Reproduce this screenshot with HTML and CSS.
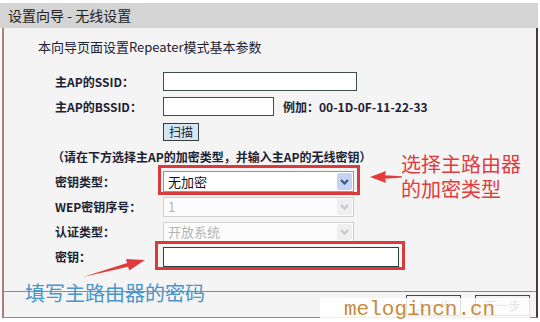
FILE: index.html
```html
<!DOCTYPE html>
<html lang="zh-CN">
<head>
    <meta charset="UTF-8">
    <title>设置向导 - 无线设置</title>
    <link rel="stylesheet" href="styles.css">
</head>
<body>
<div class="page">
    <div class="titlebar">设置向导 - 无线设置</div>
    <div class="panel">
        <div class="content">
            <p class="intro">本向导页面设置Repeater模式基本参数</p>
            <div class="form">
                <div class="row">
                    <label>主AP的SSID：</label>
                    <input class="text ssid" type="text">
                </div>
                <div class="row">
                    <label>主AP的BSSID：</label>
                    <input class="text bssid" type="text">
                    <span class="hint">例加：00-1D-0F-11-22-33</span>
                </div>
                <div class="row">
                    <label></label>
                    <button class="scan">扫描</button>
                </div>
                <div class="row note">（请在下方选择主AP的加密类型，并输入主AP的无线密钥）</div>
                <div class="row">
                    <label>密钥类型：</label>
                    <div class="select">
                        <span>无加密</span>
                        <span class="arrow"><svg width="9" height="6" viewBox="0 0 9 6"><path d="M1 1 L4.5 4.5 L8 1" fill="none" stroke-width="2"/></svg></span>
                    </div>
                </div>
                <div class="row">
                    <label>WEP密钥序号：</label>
                    <div class="select off">
                        <span>1</span>
                        <span class="arrow"><svg width="9" height="6" viewBox="0 0 9 6"><path d="M1 1 L4.5 4.5 L8 1" fill="none" stroke-width="2"/></svg></span>
                    </div>
                </div>
                <div class="row">
                    <label>认证类型：</label>
                    <div class="select off">
                        <span>开放系统</span>
                        <span class="arrow"><svg width="9" height="6" viewBox="0 0 9 6"><path d="M1 1 L4.5 4.5 L8 1" fill="none" stroke-width="2"/></svg></span>
                    </div>
                </div>
                <div class="row">
                    <label>密钥：</label>
                    <input class="text pwd" type="text">
                </div>
            </div>
        </div>
        <div class="footer">
            <button class="nav">上一步</button>
            <button class="nav">下一步</button>
        </div>
    </div>

    <!-- 标注：红框和箭头 -->
    <svg class="marks" width="540" height="322" viewBox="0 0 540 322">
        <rect x="159.5" y="166.5" width="199" height="27" fill="none" stroke="#d93a3c" stroke-width="3"/>
        <rect x="156.5" y="242.5" width="247" height="26" fill="none" stroke="#d93a3c" stroke-width="3"/>
        <polygon points="370,177 386,171 385,175.3 402,176.2 402,177.6 385,178.8 386,183" fill="#e23b3d"/>
        <polygon points="145,260 126,259 127.1,262.9 83,277 128.1,266.7 129.2,270.6" fill="#e23b3d"/>
    </svg>
    <div class="tip tip-red">选择主路由器<br>的加密类型</div>
    <div class="tip tip-blue">填写主路由器的密码</div>

    <div class="watermark">melogincn.cn</div>
</div>
</body>
</html>
```

FILE: styles.css
```css
*{
    margin: 0;
    padding: 0;
    box-sizing: border-box;
}
body{
    background: #fff;
    font-family: "Noto Sans CJK SC", sans-serif;
    color: #1c2233;
}
.page{
    position: relative;
    width: 540px;
    height: 322px;
    overflow: hidden;
}
.titlebar{
    margin: 3px 2px 0 0;
    height: 25px;
    line-height: 25px;
    padding-left: 8px;
    background: #d4d4d4;
    font-size: 14px;
    color: #222;
}
.panel{
    margin: 0 2px;
    border-left: 2px solid #b27a78;
    border-right: 2px solid #4b3a3a;
    border-bottom: 1px solid #b27a78;
    background: #f4f4f4;
}
.content{
    height: 263px;
    padding-top: 9px;
}
.intro{
    margin: 0 0 12px 34px;
    font-size: 13px;
    line-height: 20px;
}
.form{
    margin-left: 51px;
}
.row{
    display: flex;
    align-items: center;
    height: 25px;
    font-size: 12px;
}
.row label{
    width: 108px;
    font-weight: bold;
}
.note{
    margin-left: -3px;
    font-weight: bold;
}
.text{
    height: 19px;
    border: 1px solid #3e4e4e;
    background: #fff;
}
.ssid{
    width: 194px;
}
.bssid{
    width: 111px;
}
.pwd{
    width: 236px;
    height: 20px;
    border-color: #2a4040;
}
.hint{
    margin-left: 9px;
    font-weight: bold;
}
.scan{
    width: 36px;
    height: 18px;
    border: 1px solid #3a3a3a;
    background: #d5e5f1;
    font-family: inherit;
    font-size: 12px;
    line-height: 16px;
    color: #1c2233;
}
.select{
    width: 191px;
    height: 21px;
    display: flex;
    align-items: center;
    justify-content: space-between;
    padding-left: 4px;
    border: 1px solid #7f9db9;
    background: #fff;
    font-size: 13px;
    color: #111;
}
.select .arrow{
    width: 15px;
    height: 17px;
    margin-right: 1px;
    display: flex;
    align-items: center;
    justify-content: center;
    background: #c3d4f3;
    border-radius: 2px;
}
.select .arrow path{
    stroke: #3e557f;
}
.select.off{
    height: 20px;
    border-color: #cfcfcf;
    background: #fcfcfc;
    color: #b4b4b4;
}
.select.off .arrow{
    height: 16px;
    background: #efefef;
}
.select.off .arrow path{
    stroke: #c6c6c6;
}
.footer{
    height: 26px;
    border-top: 1px solid #b27a78;
    display: flex;
    justify-content: flex-end;
    gap: 14px;
    padding: 3px 6px 0 0;
}
.nav{
    width: 55px;
    height: 21px;
    border: 1px solid #3a4a5a;
    background: #f2f2f2;
    font-family: inherit;
    font-size: 12px;
    color: #444;
}
.marks{
    position: absolute;
    top: 0;
    left: 0;
}
.tip{
    position: absolute;
    font-size: 20px;
    line-height: 25px;
}
.tip-red{
    left: 401px;
    top: 151px;
    color: #e23b3d;
}
.tip-blue{
    left: 25px;
    top: 280px;
    color: #4a94c8;
}
.watermark{
    position: absolute;
    left: 320px;
    top: 298px;
    width: 210px;
    height: 24px;
    padding-left: 24px;
    background: rgba(255,255,255,0.85);
    font-family: "Liberation Mono", monospace;
    font-size: 21px;
    line-height: 24px;
    color: #c88a3c;
}
```
